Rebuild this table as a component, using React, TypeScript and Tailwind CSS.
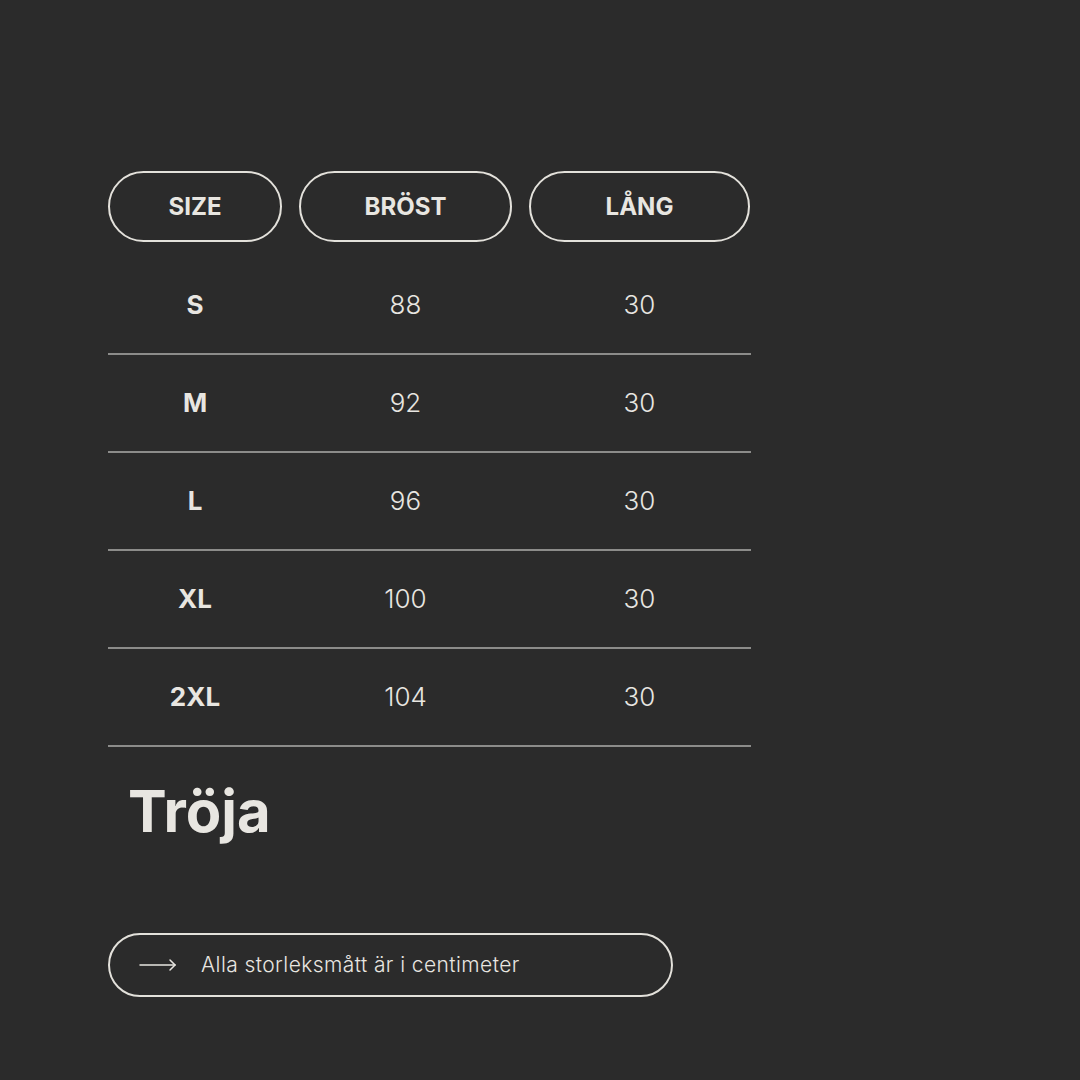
import React from "react";

const rows = [
  { size: "S", brost: "88", lang: "30" },
  { size: "M", brost: "92", lang: "30" },
  { size: "L", brost: "96", lang: "30" },
  { size: "XL", brost: "100", lang: "30" },
  { size: "2XL", brost: "104", lang: "30" },
];

const cols = "grid grid-cols-[174px_213px_221px] gap-x-[17px]";

const App: React.FC = () => {
  return (
    <main
      className="w-[1080px] h-[1080px] bg-[#2b2b2b] text-[#e8e6e1] pl-[108px] pt-[171px]"
      style={{ fontFamily: "Inter, 'Liberation Sans', sans-serif" }}
    >
      <div className="w-[643px]">
        {/* header pills */}
        <div className={cols}>
          {["SIZE", "BRÖST", "LÅNG"].map((h) => (
            <div
              key={h}
              className="h-[71px] rounded-full border-2 border-[#e3e1db] flex items-center justify-center text-[24px] font-bold"
            >
              {h}
            </div>
          ))}
        </div>

        {/* rows */}
        <div className="mt-[15px]">
          {rows.map((r) => (
            <div key={r.size} className={`${cols} h-[98px] items-center pb-[2px] border-b-2 border-[#8c8c8a]`}>
              <span className="text-center text-[26px] font-bold">{r.size}</span>
              <span className="text-center text-[26px] font-light">{r.brost}</span>
              <span className="text-center text-[26px] font-light">{r.lang}</span>
            </div>
          ))}
        </div>
      </div>

      <h1 className="mt-[35px] pl-[20px] text-[58px] font-bold leading-none">Tröja</h1>

      <div className="mt-[93px] w-[565px] h-[64px] rounded-full border-2 border-[#e3e1db] flex items-center pl-[29px]">
        <svg width="38" height="14" viewBox="0 0 38 14" fill="none" stroke="#e8e6e1" strokeWidth="1.5" strokeLinecap="round">
          <path d="M1 7h35" />
          <path d="M31 2l5 5-5 5" />
        </svg>
        <span className="ml-[24px] text-[21px] font-light tracking-[0.02em]">Alla storleksmått är i centimeter</span>
      </div>
    </main>
  );
};

export default App;
